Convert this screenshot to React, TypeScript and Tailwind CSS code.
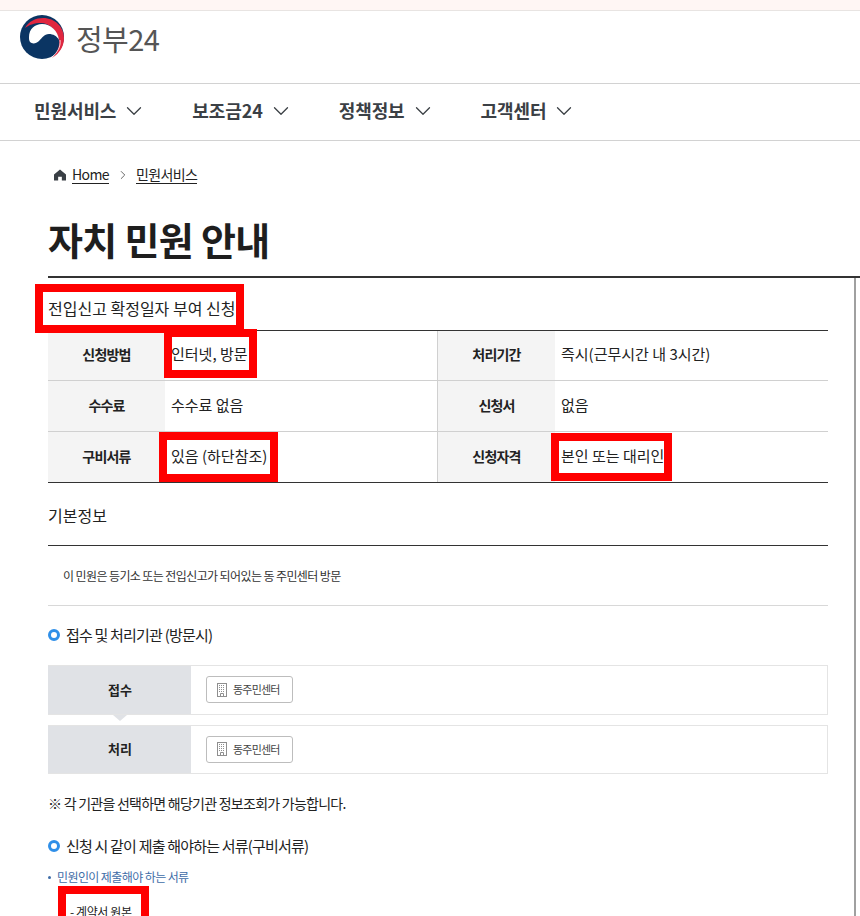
import React from 'react';
import { ChevronDown, ChevronRight } from 'lucide-react';

const FONT = "font-['Noto_Sans_CJK_KR','Noto_Sans',sans-serif]";

const navItems = ['민원서비스', '보조금24', '정책정보', '고객센터'];

const Logo = () => (
  <svg width="46" height="44" viewBox="0 0 46 44">
    <circle cx="23" cy="22" r="22" fill="#0b3563" />
    <path d="M6 13C10 6 17 3 24 3c12 0 21 9 21 20 0 8-4 15-12 20 6-6 8-13 7-18C38 15 30 8 22 8c-7 0-12 2-16 5z" fill="#e0263f" />
    <path d="M10 22c0-8 6-13 13-13 9 0 16 7 17 16-2-4-6-6-10-6-5 0-7 4-10 7-3 3-7 3-9 1-1-1.500-1-3-1-5z" fill="#fff" />
    <path d="M41 25c1 7-3 13-8 17" fill="none" stroke="#fff" strokeWidth="0.8" />
  </svg>
);

const RedBox = ({ className }: { className: string }) => (
  <span className={`absolute border-[8px] border-[#f00] ${className}`} />
);

const Row = ({
  l1, v1, l2, v2, box1, box2, last, height,
}: { l1: string; v1: string; l2: string; v2: string; box1?: string; box2?: string; last?: boolean; height: string }) => (
  <div className={`flex items-stretch ${height} ${last ? 'border-b border-[#333]' : 'border-b border-[#d0d0d0]'}`}>
    <div className="flex w-[117px] items-center justify-center bg-[#f4f4f4] pb-[2px] text-[14px] font-bold tracking-[-0.8px] text-[#222]">{l1}</div>
    <div className="flex w-[272px] items-center pb-[2px] pl-[6px] text-[15px] text-[#222]">
      <span className="relative">
        {v1}
        {box1 && <RedBox className={box1} />}
      </span>
    </div>
    <div className="flex w-[118px] items-center justify-center border-l border-[#d0d0d0] bg-[#f4f4f4] pb-[2px] text-[14px] font-bold tracking-[-0.8px] text-[#222]">{l2}</div>
    <div className="flex flex-1 items-center pb-[2px] pl-[6px] text-[15px] text-[#222]">
      <span className="relative">
        {v2}
        {box2 && <RedBox className={box2} />}
      </span>
    </div>
  </div>
);

const BuildingIcon = () => (
  <svg width="10" height="14" viewBox="0 0 10 14" fill="none" stroke="#8f8f8f" strokeWidth="1">
    <rect x="0.5" y="0.5" width="9" height="13" />
    <path d="M2 2.500h6M2 4.500h6M2 6.500h6M2 8.500h6" strokeDasharray="1 1" />
    <path d="M3.500 13.500V10.500h3v3" />
  </svg>
);

const AgencyRow = ({ label, arrow, height }: { label: string; arrow?: boolean; height: string }) => (
  <div className={`relative flex border-y border-r border-[#e4e4e4] ${height}`}>
    <div className="flex w-[143px] items-center justify-center bg-[#e0e2e6] pl-[1px] text-[13px] font-bold text-[#222]">{label}</div>
    <div className="flex items-center pl-[15px]">
      <div className="flex h-[27px] w-[87px] items-center gap-[6px] rounded-[3px] border border-[#bdbdbd] pl-[10px] text-[11px] tracking-[-0.8px] text-[#444]">
        <BuildingIcon />
        동주민센터
      </div>
    </div>
    {arrow && (
      <div className="absolute left-[65px] top-[49px] h-0 w-0 border-x-[7px] border-t-[6px] border-x-transparent border-t-[#e0e2e6]" />
    )}
  </div>
);

const Bullet = ({ children }: { children: React.ReactNode }) => (
  <div className="flex items-center gap-[6px] text-[15px] tracking-[-0.8px] text-[#222]">
    <span className="h-[12px] w-[12px] rounded-full border-[3px] border-[#2f8fe8] bg-white" />
    {children}
  </div>
);

export default function App() {
  return (
    <div className={`h-[916px] overflow-hidden bg-white ${FONT}`}>
      <div className="h-[11px] border-b border-[#e8e4e2] bg-[#fff6f4]" />

      <header className="flex h-[73px] items-start border-b border-[#d2d2d2] pl-[19px] pt-[4px]">
        <Logo />
        <span className="ml-[11px] mt-[3px] text-[29px] leading-[40px] tracking-[-0.6px] text-[#555]">정부24</span>
      </header>

      <nav className="flex h-[57px] items-center border-b border-[#d2d2d2] pb-[3px] pl-[34px] text-[#3b4045]">
        {navItems.map((item) => (
          <div key={item} className="mr-[45px] flex items-center gap-[5px]">
            <span className="text-[18px] font-bold tracking-[-0.1px]">{item}</span>
            <ChevronDown size={26} strokeWidth={1.2} />
          </div>
        ))}
      </nav>

      <div className="flex h-[70px] items-center pb-[3px] pl-[54px] text-[14px] text-[#222]">
        <svg width="12" height="12" viewBox="0 0 13 12" fill="#3a3f45">
          <path d="M6.500 0 13 5.500V12H8.500V8h-4v4H0V5.500z" />
        </svg>
        <span className="ml-[6px] border-b border-[#222] leading-[17px] tracking-[-0.6px]">Home</span>
        <ChevronRight size={14} strokeWidth={1.5} className="ml-[7px] mr-[6px] text-[#555]" />
        <span className="border-b border-[#222] leading-[17px] tracking-[-0.6px]">민원서비스</span>
      </div>

      <h1 className="h-[65px] pl-[48px] text-[38px] font-bold leading-[56px] tracking-[-0.7px] text-[#1e1e1e]">자치 민원 안내</h1>

      <div className="ml-[48px] border-t-2 border-[#333]">
        <div className="h-[640px] w-[808px] border-r-2 border-[#a0a0a0]">
          <div className="w-[780px]">
            <div className="flex h-[52px] items-center pt-[8px] text-[16px] text-[#222]">
              <span className="relative">
                전입신고 확정일자 부여 신청
                <RedBox className="-left-[13px] -right-[9px] -top-[12px] -bottom-[13px]" />
              </span>
            </div>

            <div className="border-t border-[#333]">
              <Row height="h-[50px]" l1="신청방법" v1="인터넷, 방문" l2="처리기간" v2="즉시(근무시간 내 3시간)" box1="-left-[7px] -right-[9px] -top-[14px] -bottom-[12px]" />
              <Row height="h-[51px]" l1="수수료" v1="수수료 없음" l2="신청서" v2="없음" />
              <Row
                height="h-[51px]"
                l1="구비서류"
                v1="있음 (하단참조)"
                l2="신청자격"
                v2="본인 또는 대리인"
                box1="-left-[12px] -right-[11px] -top-[13px] -bottom-[15px]"
                box2="-left-[10px] -right-[8px] -top-[12px] -bottom-[14px]"
                last
              />
            </div>

            <div className="flex h-[63px] items-center border-b border-[#333] pt-[1px] text-[16px] text-[#222]">기본정보</div>
            <div className="flex h-[60px] items-center border-b border-[#d8d8d8] pl-[15px] text-[12px] tracking-[-0.6px] text-[#333]">
              이 민원은 등기소 또는 전입신고가 되어있는 동 주민센터 방문
            </div>

            <div className="mb-[18px] mt-[18px]">
              <Bullet>접수 및 처리기관 (방문시)</Bullet>
            </div>

            <div className="flex flex-col gap-[10px]">
              <AgencyRow height="h-[50px]" label="접수" arrow />
              <AgencyRow height="h-[49px]" label="처리" />
            </div>

            <p className="mt-[19px] text-[14px] tracking-[-0.75px] text-[#222]">※ 각 기관을 선택하면 해당기관 정보조회가 가능합니다.</p>

            <div className="mt-[21px]">
              <Bullet>신청 시 같이 제출 해야하는 서류(구비서류)</Bullet>
            </div>

            <div className="mt-[11px] flex items-center gap-[6px] text-[12px] tracking-[-0.6px] text-[#3f6da8]">
              <span className="h-[3px] w-[3px] rounded-full bg-[#3f6da8]" />
              민원인이 제출해야 하는 서류
            </div>

            <div className="ml-[22px] mt-[17px] text-[12px] tracking-[-0.4px] text-[#222]">
              <span className="relative">
                - 계약서 원본
                <RedBox className="-left-[12px] -right-[17px] -top-[17px] -bottom-[14px]" />
              </span>
            </div>
          </div>
        </div>
      </div>
    </div>
  );
}
